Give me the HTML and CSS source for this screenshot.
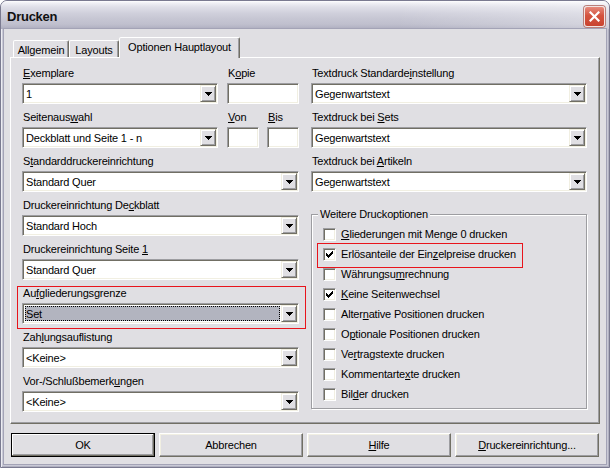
FILE: index.html
```html
<!DOCTYPE html>
<html lang="de">
<head>
<meta charset="utf-8">
<title>Drucken</title>
<link rel="stylesheet" href="styles.css">
</head>
<body>
<div class="window">
  <div class="titlebar">
    <span class="title">Drucken</span>
    <span class="close">
      <svg width="11" height="11" viewBox="0 0 11 11"><path d="M1.5 1.5 L9.5 9.5 M9.5 1.5 L1.5 9.5" stroke="#fff" stroke-width="2.2" stroke-linecap="square" fill="none"/></svg>
    </span>
  </div>
  <div class="client">
    <div class="tabs">
      <div class="tab t1">Allgemein</div>
      <div class="tab t2">Layouts</div>
      <div class="tab active">Optionen Hauptlayout</div>
    </div>
    <div class="panel">
      <div class="col">
        <div class="split">
          <div class="field f-ex">
            <label><u>E</u>xemplare</label>
            <div class="combo"><span class="val">1</span><span class="drop"></span></div>
          </div>
          <div class="field f-kopie">
            <label>K<u>o</u>pie</label>
            <div class="edit"></div>
          </div>
        </div>
        <div class="split">
          <div class="field f-ex">
            <label>Seitenaus<u>w</u>ahl</label>
            <div class="combo"><span class="val">Deckblatt und Seite 1 - n</span><span class="drop"></span></div>
          </div>
          <div class="field f-von">
            <label><u>V</u>on</label>
            <div class="edit"></div>
          </div>
          <div class="field f-bis">
            <label><u>B</u>is</label>
            <div class="edit"></div>
          </div>
        </div>
        <div class="field">
          <label>S<u>t</u>andarddruckereinrichtung</label>
          <div class="combo"><span class="val">Standard Quer</span><span class="drop"></span></div>
        </div>
        <div class="field">
          <label>Druckereinrichtung De<u>c</u>kblatt</label>
          <div class="combo"><span class="val">Standard Hoch</span><span class="drop"></span></div>
        </div>
        <div class="field">
          <label>Druckereinrichtung Seite <u>1</u></label>
          <div class="combo"><span class="val">Standard Quer</span><span class="drop"></span></div>
        </div>
        <div class="field mark-l">
          <label>Au<u>f</u>gliederungsgrenze</label>
          <div class="combo"><span class="val sel">Set</span><span class="drop"></span></div>
        </div>
        <div class="field">
          <label>Zah<u>l</u>ungsauflistung</label>
          <div class="combo"><span class="val">&lt;Keine&gt;</span><span class="drop"></span></div>
        </div>
        <div class="field">
          <label>Vor-/Schlußbemerk<u>u</u>ngen</label>
          <div class="combo"><span class="val">&lt;Keine&gt;</span><span class="drop"></span></div>
        </div>
      </div>
      <div class="col">
        <div class="field">
          <label>Textdruck Standarde<u>i</u>nstellung</label>
          <div class="combo"><span class="val">Gegenwartstext</span><span class="drop"></span></div>
        </div>
        <div class="field">
          <label>Textdruck bei <u>S</u>ets</label>
          <div class="combo"><span class="val">Gegenwartstext</span><span class="drop"></span></div>
        </div>
        <div class="field">
          <label>Textdruck bei <u>A</u>rtikeln</label>
          <div class="combo"><span class="val">Gegenwartstext</span><span class="drop"></span></div>
        </div>
        <div class="group">
          <span class="legend">Weitere Druckoptionen</span>
          <div class="cb-row"><span class="cb"></span><span><u>G</u>liederungen mit Menge 0 drucken</span></div>
          <div class="cb-row mark-r"><span class="cb"><svg width="7" height="7" viewBox="0 0 7 7" shape-rendering="crispEdges"><path d="M6 0h1v1h-1z M5 1h2v1h-2z M0 2h1v1h-1z M4 2h3v1h-3z M0 3h2v1h-2z M3 3h3v1h-3z M0 4h5v1h-5z M1 5h3v1h-3z M2 6h1v1h-1z" fill="#000"/></svg></span><span>Erlösanteile der Ein<u>z</u>elpreise drucken</span></div>
          <div class="cb-row"><span class="cb"></span><span>Währungsu<u>m</u>rechnung</span></div>
          <div class="cb-row"><span class="cb"><svg width="7" height="7" viewBox="0 0 7 7" shape-rendering="crispEdges"><path d="M6 0h1v1h-1z M5 1h2v1h-2z M0 2h1v1h-1z M4 2h3v1h-3z M0 3h2v1h-2z M3 3h3v1h-3z M0 4h5v1h-5z M1 5h3v1h-3z M2 6h1v1h-1z" fill="#000"/></svg></span><span><u>K</u>eine Seitenwechsel</span></div>
          <div class="cb-row"><span class="cb"></span><span>Alter<u>n</u>ative Positionen drucken</span></div>
          <div class="cb-row"><span class="cb"></span><span>O<u>p</u>tionale Positionen drucken</span></div>
          <div class="cb-row"><span class="cb"></span><span>Ve<u>r</u>tragstexte drucken</span></div>
          <div class="cb-row"><span class="cb"></span><span>Kommentarte<u>x</u>te drucken</span></div>
          <div class="cb-row"><span class="cb"></span><span>Bil<u>d</u>er drucken</span></div>
        </div>
      </div>
    </div>
    <div class="buttons">
      <div class="btn default">OK</div>
      <div class="btn">Abbrechen</div>
      <div class="btn"><span><u>H</u>ilfe</span></div>
      <div class="btn"><span><u>D</u>ruckereinrichtung...</span></div>
    </div>
  </div>
</div>
</body>
</html>
```

FILE: styles.css
```css
* { box-sizing: border-box; }
html, body { margin: 0; padding: 0; background: #fff; }
body {
  width: 610px;
  height: 468px;
  overflow: hidden;
  font-family: "Liberation Sans", Arial, sans-serif;
  font-size: 11px;
  letter-spacing: -0.18px;
  color: #000;
}
u { text-decoration: underline; text-underline-offset: 1px; text-decoration-thickness: 1px; }

.window {
  width: 610px;
  height: 468px;
  display: flex;
  flex-direction: column;
  border: 1px solid #7a7a90;
  border-radius: 7px 7px 0 0;
  background: #c9c9d6;
  box-shadow: inset 1px 0 0 #ececf2, inset -1px 0 0 #b0b0c0, inset 0 -1px 0 #b0b0c0;
  overflow: hidden;
}

.titlebar {
  height: 28px;
  flex: none;
  display: flex;
  align-items: center;
  justify-content: space-between;
  padding: 0 4px 0 6px;
  background:
    linear-gradient(to right, rgba(255,255,255,0) 65%, rgba(255,255,255,0.35) 100%),
    linear-gradient(to bottom, #ffffff 0px, #f0f0f5 2px, #dfdfe8 6px, #d0d0dc 12px, #c6c6d3 18px, #c0c0ce 23px, #b6b6c6 26px, #a9a9bb 28px);
}
.title {
  font-weight: bold;
  font-size: 13px;
  letter-spacing: -0.25px;
  padding-top: 2px;
  color: #111;
}
.close {
  width: 21px;
  height: 21px;
  margin-top: 3px;
  border-radius: 3px;
  border: 1px solid #f2e4e2;
  background: linear-gradient(#e68a7c, #d4543f 45%, #c9432f);
  box-shadow: 0 0 0 1px #b97f7a;
  display: flex;
  align-items: center;
  justify-content: center;
}
.close svg { display: block; }

.client {
  flex: 1;
  margin: 0 3px 3px 3px;
  background: #e0dfe3;
  box-shadow: 0 0 0 1px #a3a3b6;
  display: flex;
  flex-direction: column;
  padding: 8px 6px 7px 6px;
}

.tabs {
  display: flex;
  align-items: flex-end;
  height: 20px;
  padding-left: 3px;
  flex: none;
}
.tab {
  height: 17px;
  background: #e0dfe3;
  border: 1px solid;
  border-bottom: none;
  border-color: #fff #716f64 transparent #fff;
  box-shadow: inset -1px 0 0 #9d9da1;
  border-radius: 2px 2px 0 0;
  display: flex;
  align-items: center;
  justify-content: center;
  white-space: nowrap;
  padding-top: 1px;
}
.t1 { width: 56px; }
.t2 { width: 50px; }
.tab.active {
  width: 121px;
  height: 21px;
  margin-bottom: -1px;
  position: relative;
  z-index: 1;
  padding-top: 0;
  padding-bottom: 3px;
}

.panel {
  flex: 1;
  border: 1px solid;
  border-color: #fff #716f64 #716f64 #fff;
  box-shadow: inset -1px -1px 0 #9d9da1;
  display: grid;
  grid-template-columns: 277px 276px;
  column-gap: 12px;
  align-content: start;
  padding: 9px 0 0 11px;
}

.col { display: flex; flex-direction: column; gap: 7px; }
.field { display: flex; flex-direction: column; }
.field label {
  display: block;
  height: 13px;
  line-height: 13px;
  margin-bottom: 3px;
  white-space: nowrap;
  padding-left: 1px;
}
.split { display: flex; }
.f-ex { width: 196px; }
.f-kopie { width: 72px; margin-left: 9px; }
.f-von { width: 32px; margin-left: 9px; }
.f-bis { width: 32px; margin-left: 8px; }

.combo, .edit {
  height: 21px;
  background: #fff;
  border: 1px solid;
  border-color: #9d9da1 #fff #fff #9d9da1;
  box-shadow: inset 1px 1px 0 #716f64, inset -1px -1px 0 #f1efe2;
}
.combo {
  padding: 1px;
  display: flex;
  align-items: stretch;
}
.val {
  flex: 1;
  display: flex;
  align-items: center;
  padding-left: 2px;
  white-space: nowrap;
  overflow: hidden;
}
.val.sel {
  background: #b2b4bf;
  margin: 1px 1px 1px 1px;
  outline: 1px dotted #000;
  outline-offset: -1px;
  padding-left: 1px;
}
.drop {
  width: 16px;
  flex: none;
  background: #e0dfe3;
  border: 1px solid;
  border-color: #f1efe2 #716f64 #716f64 #f1efe2;
  box-shadow: inset 1px 1px 0 #fff, inset -1px -1px 0 #9d9da1;
  display: flex;
  align-items: center;
  justify-content: center;
}
.drop::after {
  content: "";
  width: 7px;
  height: 4px;
  background:
    linear-gradient(#000, #000) 0 0 / 7px 1px no-repeat,
    linear-gradient(#000, #000) 1px 1px / 5px 1px no-repeat,
    linear-gradient(#000, #000) 2px 2px / 3px 1px no-repeat,
    linear-gradient(#000, #000) 3px 3px / 1px 1px no-repeat;
}

.group {
  position: relative;
  margin-top: 15px;
  border: 1px solid #9d9da1;
  box-shadow: 1px 1px 0 #fff, inset 1px 1px 0 #fff;
  padding: 9px 0 4px 11px;
}
.legend {
  position: absolute;
  top: -7px;
  left: 6px;
  background: #e0dfe3;
  padding: 0 2px;
  line-height: 13px;
  white-space: nowrap;
}
.cb-row {
  display: flex;
  align-items: center;
  height: 20px;
  width: fit-content;
  white-space: nowrap;
}
.cb {
  width: 13px;
  height: 13px;
  flex: none;
  border: 1px solid;
  border-color: #9d9da1 #fff #fff #9d9da1;
  box-shadow: inset 1px 1px 0 #716f64, inset -1px -1px 0 #f1efe2;
  background: #fff;
  margin-right: 5px;
  padding: 2px;
}
.cb svg { display: block; }

.mark-l, .mark-r { position: relative; }
.mark-l::after, .mark-r::after {
  content: "";
  position: absolute;
  border: 1px solid #e8141c;
  pointer-events: none;
}
.mark-l::after { top: -1px; left: -5px; right: -7px; bottom: -5px; }
.mark-r::after { top: -1px; left: -6px; right: -7px; bottom: -4px; }

.buttons {
  display: grid;
  grid-template-columns: repeat(4, 144px);
  column-gap: 4px;
  margin-top: 9px;
  padding-left: 1px;
  flex: none;
}
.btn {
  height: 24px;
  display: flex;
  align-items: center;
  justify-content: center;
  background: #e0dfe3;
  border: 1px solid;
  border-color: #fff #716f64 #716f64 #fff;
  box-shadow: inset -1px -1px 0 #9d9da1, inset 1px 1px 0 #f1efe2;
  white-space: nowrap;
}
.btn.default {
  border-color: #000;
  box-shadow: inset -1px -1px 0 #716f64, inset 1px 1px 0 #fff, inset -2px -2px 0 #9d9da1;
}
```
